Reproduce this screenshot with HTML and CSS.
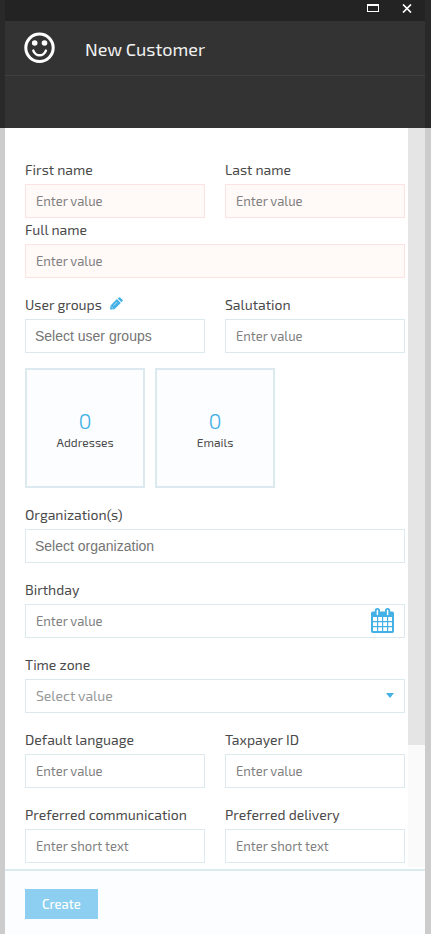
FILE: index.html
```html
<!DOCTYPE html>
<html lang="en">
<head>
<meta charset="utf-8">
<meta name="viewport" content="width=device-width, initial-scale=1">
<title>New Customer</title>
<link rel="stylesheet" href="styles.css">
</head>
<body>
<main class="blade">
  <header class="blade-head">
    <div class="window-bar">
      <button class="window-button" type="button" aria-label="Maximize">
        <svg width="12" height="8" viewBox="0 0 12 8"><path d="M0 0h12v8H0zM1 2v5h10V2z" fill="#fff" fill-rule="evenodd"/></svg>
      </button>
      <button class="window-button" type="button" aria-label="Close">
        <svg width="10" height="9" viewBox="0 0 10 9"><path d="M1 .5l8 8M9 .5l-8 8" stroke="#fff" stroke-width="1.7"/></svg>
      </button>
    </div>
    <div class="title-row">
      <svg class="face" width="32" height="32" viewBox="0 0 32 32" fill="none">
        <circle cx="15.500" cy="15.800" r="13.700" stroke="#fff" stroke-width="3"/>
        <circle cx="10.700" cy="11" r="2.800" fill="#fff"/>
        <circle cx="20.500" cy="11" r="2.800" fill="#fff"/>
        <path d="M9.300 18.600c1.200 3.100 3.400 4.700 6.300 4.700s5.100-1.600 6.300-4.700" stroke="#fff" stroke-width="2.500" stroke-linecap="round"/>
      </svg>
      <h1 class="title">New Customer</h1>
    </div>
    <div class="toolbar"></div>
  </header>

  <div class="content">
    <form class="form" id="customer-form">
      <div class="row row-tight">
        <div class="field">
          <label class="label" for="first-name">First name</label>
          <input class="input required" id="first-name" type="text" placeholder="Enter value">
        </div>
        <div class="field">
          <label class="label" for="last-name">Last name</label>
          <input class="input required" id="last-name" type="text" placeholder="Enter value">
        </div>
      </div>
      <div class="row">
        <div class="field wide">
          <label class="label" for="full-name">Full name</label>
          <input class="input required" id="full-name" type="text" placeholder="Enter value">
        </div>
      </div>
      <div class="row">
        <div class="field">
          <div class="label-line">
            <label class="label" for="user-groups">User groups</label>
            <button class="edit" type="button" aria-label="Edit user groups">
              <svg width="13" height="13" viewBox="0 0 13 13" fill="#43b0e6"><path d="M0 12.600l.6-4.200L6.900 2.100l3.900 3.900-6.400 6.200zM7.700 1.400L8.900.4q.6-.5 1.200 0l2.400 2.400q.6.6 0 1.200l-1 1.200z"/><path d="M1.400 9.800l1.600 1.600M3.600 8.600l3.600-3.600" stroke="#fff" stroke-width=".6"/></svg>
            </button>
          </div>
          <input class="input picker" id="user-groups" type="text" placeholder="Select user groups">
        </div>
        <div class="field">
          <label class="label" for="salutation">Salutation</label>
          <input class="input" id="salutation" type="text" placeholder="Enter value">
        </div>
      </div>
      <div class="tiles">
        <button class="tile" type="button"><span class="count">0</span><span class="caption">Addresses</span></button>
        <button class="tile" type="button"><span class="count">0</span><span class="caption">Emails</span></button>
      </div>
      <div class="row">
        <div class="field wide">
          <label class="label" for="organization">Organization(s)</label>
          <input class="input picker" id="organization" type="text" placeholder="Select organization">
        </div>
      </div>
      <div class="row">
        <div class="field wide">
          <label class="label" for="birthday">Birthday</label>
          <div class="input-wrap">
            <input class="input" id="birthday" type="text" placeholder="Enter value">
            <button class="calendar" type="button" aria-label="Open calendar">
              <svg width="23" height="25" viewBox="0 0 23 25">
                <path d="M1.800 3.500h19.400q1.800 0 1.800 1.800v17.900q0 1.800-1.800 1.800H1.800Q0 25 0 23.200V5.300q0-1.800 1.800-1.800z" fill="#43b0e6"/>
                <path d="M2 9h4v4H2zM7.200 9h3.800v4H7.200zM12.200 9H16v4h-3.800zM17.200 9H21v4h-3.800zM2 14.200h4V18H2zM7.200 14.200H11V18H7.200zM12.200 14.200H16V18h-3.800zM17.200 14.200H21V18h-3.800zM2 19.200h4V23H2zM7.200 19.200H11V23H7.200zM12.200 19.200H16V23h-3.800zM17.200 19.200H21V23h-3.800z" fill="#fff"/>
                <rect x="3.800" y="0" width="5.200" height="8" rx="2.600" fill="#43b0e6"/>
                <rect x="14" y="0" width="5.200" height="8" rx="2.600" fill="#43b0e6"/>
                <path d="M6.400 2.600v4M16.600 2.600v4" stroke="#fff" stroke-width="1.500" stroke-linecap="round"/>
              </svg>
            </button>
          </div>
        </div>
      </div>
      <div class="row">
        <div class="field wide">
          <label class="label" for="time-zone">Time zone</label>
          <div class="input-wrap">
            <select class="input select" id="time-zone"><option>Select value</option></select>
            <svg class="caret" width="8" height="5" viewBox="0 0 8 5"><path d="M0 0h8L4 5z" fill="#43b0e6"/></svg>
          </div>
        </div>
      </div>
      <div class="row">
        <div class="field">
          <label class="label" for="language">Default language</label>
          <input class="input" id="language" type="text" placeholder="Enter value">
        </div>
        <div class="field">
          <label class="label" for="taxpayer">Taxpayer ID</label>
          <input class="input" id="taxpayer" type="text" placeholder="Enter value">
        </div>
      </div>
      <div class="row">
        <div class="field">
          <label class="label" for="communication">Preferred communication</label>
          <input class="input" id="communication" type="text" placeholder="Enter short text">
        </div>
        <div class="field">
          <label class="label" for="delivery">Preferred delivery</label>
          <input class="input" id="delivery" type="text" placeholder="Enter short text">
        </div>
      </div>
    </form>
    <div class="scrollbar"><div class="thumb"></div></div>
  </div>

  <footer class="footer">
    <button class="create" type="submit" form="customer-form">Create</button>
  </footer>
</main>
</body>
</html>
```
FILE: styles.css
```css
* {
  box-sizing: border-box;
}

body {
  margin: 0;
  background: #ccc linear-gradient(#292929, #292929) 0 0 / 100% 128px no-repeat;
  color: #4a4a4a;
  font: 14px/20px "Exo 2", "Open Sans", sans-serif;
}

button,
input,
select {
  margin: 0;
  font: inherit;
}

button {
  padding: 0;
  border: 0;
  background: none;
  cursor: pointer;
}

svg {
  display: block;
}

.blade {
  display: flex;
  flex-direction: column;
  min-height: 100vh;
  margin: 0 6px 0 5px;
  background: #fff;
}

.blade-head {
  background: #333;
  color: #f2f2f2;
}

.window-bar {
  display: flex;
  justify-content: flex-end;
  gap: 23px;
  height: 21px;
  padding: 4px 13px 0 0;
  background: #232323;
}

.window-button {
  display: flex;
  align-items: center;
  height: 8px;
}

.title-row {
  display: flex;
  align-items: center;
  gap: 29px;
  height: 55px;
  padding: 2px 0 0 19px;
  border-bottom: 1px solid #3f3f3f;
}

.face {
  margin-top: -2px;
}

.title {
  margin: 0;
  font-size: 18px;
  line-height: 24px;
  font-weight: 400;
}

.toolbar {
  height: 52px;
}

.content {
  display: flex;
  flex: 1;
}

.form {
  flex: 1;
  min-width: 0;
  padding: 32px 3px 6px 20px;
}

.row {
  display: grid;
  grid-template-columns: 1fr 1fr;
  column-gap: 20px;
  margin-bottom: 17px;
}

.row-tight {
  margin-bottom: 2px;
}

.row:last-child {
  margin-bottom: 0;
}

.field {
  display: flex;
  flex-direction: column;
  gap: 4px;
  min-width: 0;
}

.wide {
  grid-column: 1 / -1;
}

.label-line {
  display: flex;
  gap: 8px;
}

.edit {
  height: 16px;
}

.input {
  width: 100%;
  height: 34px;
  padding: 0 10px;
  border: 1px solid #dce9ef;
  border-radius: 0;
  outline: 0;
  background: #fff;
  color: #444;
  font-size: 13px;
}

.input::placeholder {
  color: #808080;
  opacity: 1;
}

.required {
  border-color: #fde2e2;
  background: #fff9f7;
}

.picker {
  padding: 0 9px;
  font-family: "Liberation Sans", sans-serif;
  font-size: 14px;
}

.picker::placeholder {
  color: #757575;
}

.select {
  appearance: none;
  color: #999;
  font-size: 14px;
}

.input-wrap {
  position: relative;
}

.calendar {
  position: absolute;
  top: 4px;
  right: 11px;
}

.caret {
  position: absolute;
  top: 14px;
  right: 11px;
  pointer-events: none;
}

.tiles {
  display: flex;
  gap: 10px;
  margin: -2px 0 17px;
}

.tile {
  display: flex;
  flex-direction: column;
  align-items: center;
  justify-content: center;
  width: 120px;
  height: 120px;
  padding-top: 2px;
  border: 2px solid #dce9ef;
  background: #fcfdff;
  color: #4a4a4a;
}

.count {
  color: #43b0e6;
  font-size: 22px;
  line-height: 26px;
  font-weight: 300;
}

.caption {
  font-size: 12px;
  line-height: 18px;
}

.scrollbar {
  width: 17px;
  margin-bottom: 2px;
  background: #fafafa;
}

.thumb {
  height: 83.5%;
  background: #e5e5e5;
}

.footer {
  padding: 18px 20px 15px;
  border-top: 2px solid #dce9ef;
  background: #fcfdff;
}

.create {
  display: block;
  height: 30px;
  padding: 0 17px;
  background: #8ccff0;
  color: #fff;
  font-size: 13px;
  font-weight: 500;
}
```
